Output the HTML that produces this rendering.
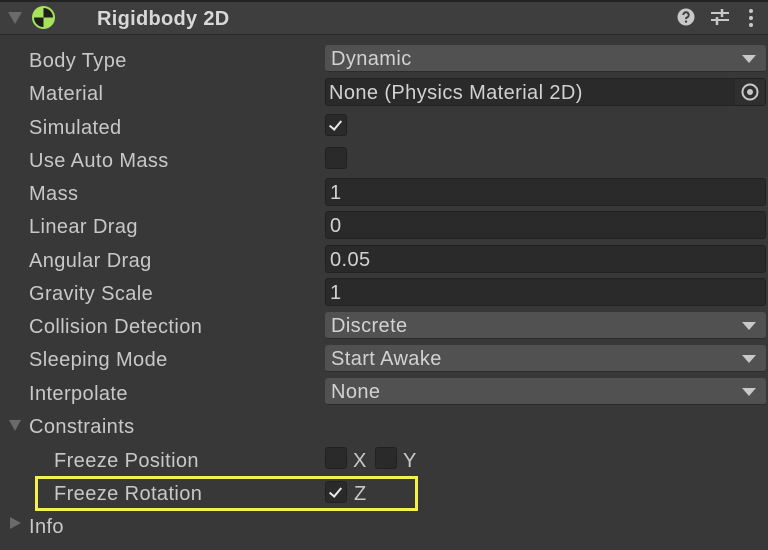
<!DOCTYPE html>
<html><head><style>
body{margin:0;width:768px;height:550px;background:#383838;font-family:"Liberation Sans",sans-serif;color:#c8c8c8;position:relative;overflow:hidden}
.a{position:absolute}
.hdr{left:0;top:0;width:768px;height:35px;background:#3e3e3e;border-top:2px solid #232323;border-bottom:1px solid #2a2a2a;box-sizing:border-box}
.lbl{position:absolute;left:29px;font-size:20px;letter-spacing:0.4px;line-height:24px;margin-top:2px}
.dd{position:absolute;left:325px;width:441px;height:27px;background:#515151;border-radius:3px;border-bottom:1px solid #2c2c2c;box-sizing:border-box;font-size:20px;letter-spacing:0.4px;line-height:28px;padding-left:6px;color:#d2d2d2}
.dd:after{content:"";position:absolute;right:10px;top:10px;border-left:7px solid transparent;border-right:7px solid transparent;border-top:8px solid #c8c8c8}
.in{position:absolute;left:325px;width:441px;height:28px;background:#2a2a2a;border:1px solid #212121;border-radius:3px;box-sizing:border-box;font-size:20px;letter-spacing:0.4px;line-height:28px;padding-left:4px;color:#d2d2d2}
.cb{position:absolute;width:22px;height:22px;background:#2a2a2a;border:1px solid #212121;border-radius:3px;box-sizing:border-box}
.ck:after{content:"";position:absolute;left:6px;top:3px;width:5px;height:10px;border-right:2.5px solid #e8e8e8;border-bottom:2.5px solid #e8e8e8;transform:rotate(40deg)}
.tri{position:absolute;width:0;height:0}
.t{position:absolute;font-size:20px;line-height:24px;margin-top:2px}
</style></head><body>
<div class="a hdr"></div>
<div class="tri" style="left:8px;top:12px;border-left:7px solid transparent;border-right:7px solid transparent;border-top:12px solid #6a6a6a"></div>
<svg class="a" style="left:31px;top:5px" width="25" height="25" viewBox="0 0 25 25"><circle cx="12.5" cy="12.5" r="10.5" fill="#a6e35a"/><path d="M12.5 2 A10.5 10.5 0 0 1 23 12.5 L12.5 12.5Z M12.5 12.5 L2 12.5 A10.5 10.5 0 0 0 12.5 23Z" fill="#1e1e1e"/><circle cx="12.5" cy="12.5" r="10.5" fill="none" stroke="#a6e35a" stroke-width="2"/></svg>
<div class="a" style="left:97px;top:7px;font-size:20px;font-weight:bold;color:#d8d8d8;line-height:24px;letter-spacing:0.3px">Rigidbody 2D</div>
<svg class="a" style="left:677px;top:8px" width="18" height="18" viewBox="0 0 18 18"><circle cx="9" cy="9" r="8.5" fill="#c8c8c8"/><path d="M6.3 7a2.7 2.7 0 1 1 3.8 2.4c-.8.4-1.1.8-1.1 1.6" stroke="#3e3e3e" stroke-width="2" fill="none"/><circle cx="9" cy="13.6" r="1.2" fill="#3e3e3e"/></svg>
<svg class="a" style="left:710px;top:8px" width="20" height="18" viewBox="0 0 20 18"><path d="M1 5h18M1 12h18" stroke="#c8c8c8" stroke-width="2"/><path d="M12 1v8M7 9v8" stroke="#c8c8c8" stroke-width="2.5"/></svg>
<svg class="a" style="left:748px;top:8px" width="6" height="20" viewBox="0 0 6 20"><circle cx="3" cy="3" r="2" fill="#c8c8c8"/><circle cx="3" cy="10" r="2" fill="#c8c8c8"/><circle cx="3" cy="17" r="2" fill="#c8c8c8"/></svg>

<div class="lbl" style="top:47px">Body Type</div><div class="dd" style="top:45px">Dynamic</div>
<div class="lbl" style="top:80px">Material</div><div class="in" style="top:78px;padding-left:3px">None (Physics Material 2D)<div class="a" style="right:0;top:0;width:30px;height:26px;background:#2f2f2f"></div><svg class="a" style="right:6px;top:4px" width="18" height="18"><circle cx="9" cy="9" r="7.5" stroke="#c8c8c8" stroke-width="2" fill="none"/><circle cx="9" cy="9" r="3" fill="#c8c8c8"/></svg></div>
<div class="lbl" style="top:114px">Simulated</div><div class="cb ck" style="left:325px;top:114px"></div>
<div class="lbl" style="top:147px">Use Auto Mass</div><div class="cb" style="left:325px;top:147px"></div>
<div class="lbl" style="top:180px">Mass</div><div class="in" style="top:178px">1</div>
<div class="lbl" style="top:213px">Linear Drag</div><div class="in" style="top:211px">0</div>
<div class="lbl" style="top:247px">Angular Drag</div><div class="in" style="top:245px">0.05</div>
<div class="lbl" style="top:280px">Gravity Scale</div><div class="in" style="top:278px">1</div>
<div class="lbl" style="top:313px">Collision Detection</div><div class="dd" style="top:312px">Discrete</div>
<div class="lbl" style="top:346px">Sleeping Mode</div><div class="dd" style="top:345px">Start Awake</div>
<div class="lbl" style="top:380px">Interpolate</div><div class="dd" style="top:378px">None</div>
<div class="tri" style="left:9px;top:420px;border-left:6px solid transparent;border-right:6px solid transparent;border-top:11px solid #6a6a6a"></div>
<div class="lbl" style="top:413px">Constraints</div>
<div class="lbl" style="left:54px;top:447px">Freeze Position</div>
<div class="cb" style="left:325px;top:447px"></div><div class="t" style="left:353px;top:447px">X</div>
<div class="cb" style="left:375px;top:447px"></div><div class="t" style="left:403px;top:447px">Y</div>
<div class="a" style="left:35px;top:476px;width:383px;height:35px;border:3px solid #f4f050;box-sizing:border-box"></div>
<div class="lbl" style="left:54px;top:480px">Freeze Rotation</div>
<div class="cb ck" style="left:325px;top:481px"></div><div class="t" style="left:354px;top:480px">Z</div>
<div class="tri" style="left:10px;top:517px;border-top:6px solid transparent;border-bottom:6px solid transparent;border-left:11px solid #6a6a6a"></div>
<div class="lbl" style="top:513px">Info</div>
</body></html>
